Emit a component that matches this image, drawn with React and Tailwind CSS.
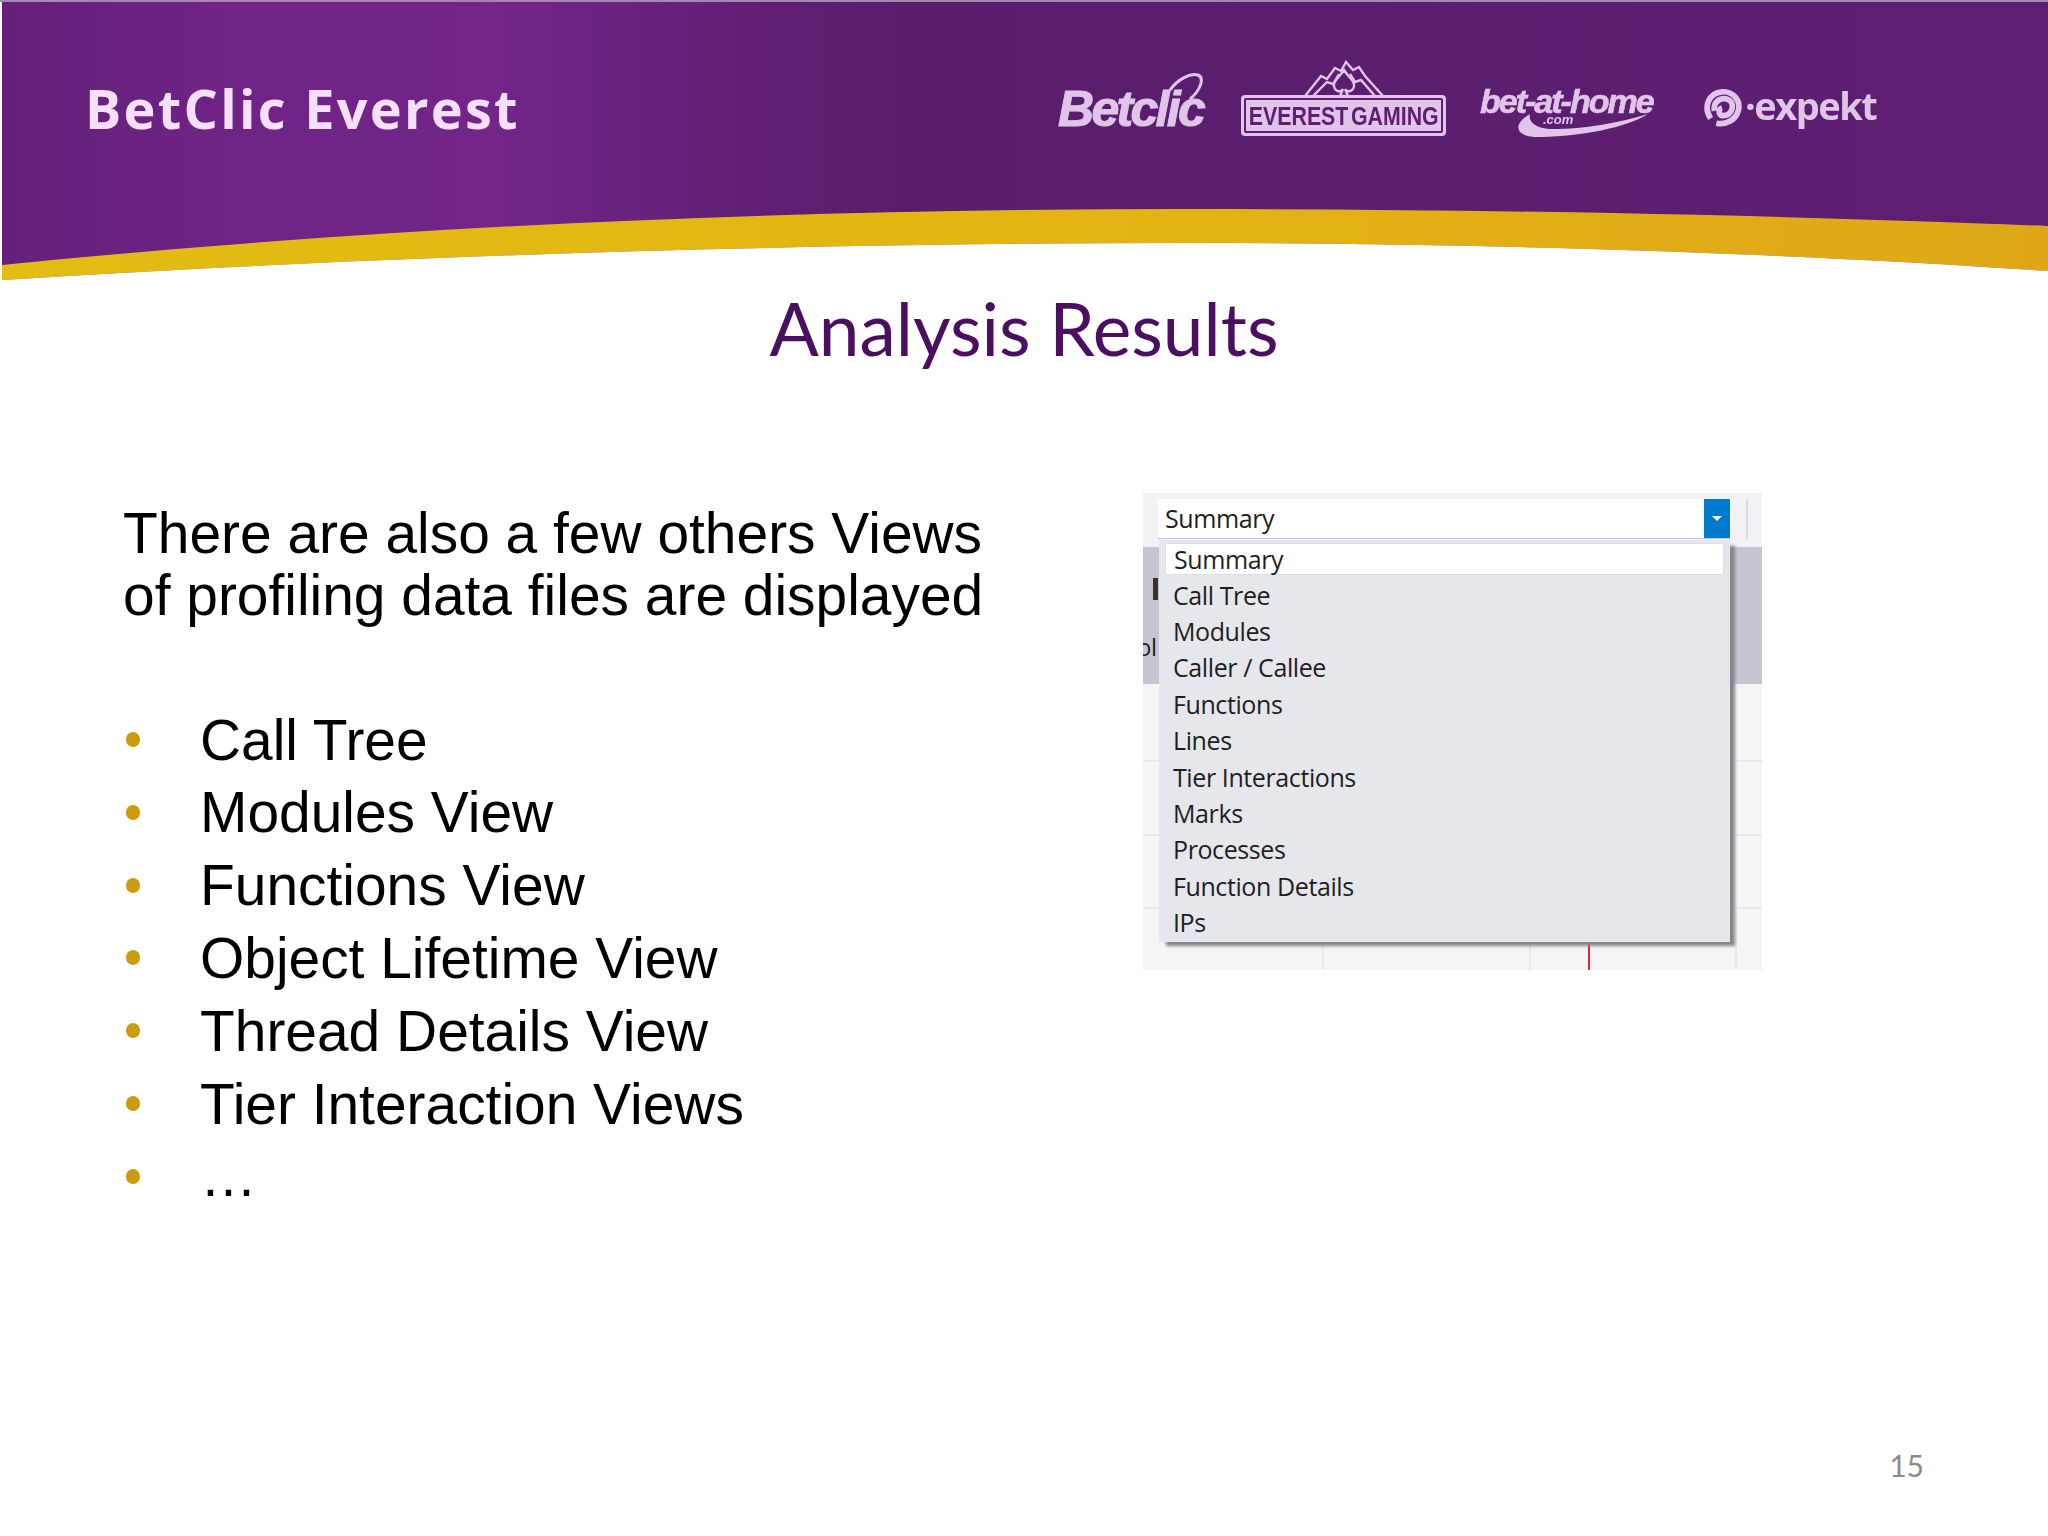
import React from 'react'

const bullets = [
  "Call Tree",
  "Modules View",
  "Functions View",
  "Object Lifetime View",
  "Thread Details View",
  "Tier Interaction Views",
  "…",
];

const menuItems = [
  "Call Tree",
  "Modules",
  "Caller / Callee",
  "Functions",
  "Lines",
  "Tier Interactions",
  "Marks",
  "Processes",
  "Function Details",
  "IPs",
];

const BannerArt = () => (
  <svg className="absolute inset-0" width="2048" height="290" viewBox="0 0 2048 290">
    <defs>
      <linearGradient id="bannerFill" x1="0" y1="0" x2="1" y2="0">
        <stop offset="0" stopColor="#65207a" />
        <stop offset="0.1" stopColor="#6e2385" />
        <stop offset="0.24" stopColor="#73258a" />
        <stop offset="0.34" stopColor="#642178" />
        <stop offset="0.44" stopColor="#5a1d6c" />
        <stop offset="1" stopColor="#5e1f72" />
      </linearGradient>
      <linearGradient id="goldFill" x1="0" y1="0" x2="1" y2="0">
        <stop offset="0" stopColor="#e2bd12" />
        <stop offset="0.5" stopColor="#e3b512" />
        <stop offset="1" stopColor="#dfa718" />
      </linearGradient>
    </defs>
    <rect x="2" y="2" width="2046" height="280" fill="url(#bannerFill)" />
    <rect x="0" y="0" width="2048" height="2" fill="#a884b6" />
    <path d="M2 280 V265 C 400 225 800 209 1190 209 C 1500 209 1800 216 2048 226 V271 C 1800 254 1500 243 1190 243 C 780 243 350 258 2 280 Z" fill="url(#goldFill)" />
    <path d="M2 280 C 350 258 780 243 1190 243 C 1500 243 1800 254 2048 271 V290 H0 V280 Z" fill="#ffffff" />
  </svg>
)

const BetclicLogo = () => (
  <div className="relative w-[147px] h-[64px] mt-[13px]">
    <svg className="absolute left-[108px] top-0" width="40" height="30" viewBox="0 0 40 30" fill="none">
      <path d="M4 17 C 12 6 24 0 32 2 C 39 5 34 18 24 26" stroke="#e0c4ea" strokeWidth="3" />
    </svg>
    <span className="absolute left-0 bottom-0 whitespace-nowrap font-['Liberation_Sans'] italic font-bold text-[50px] leading-[56px] tracking-[-2.7px] text-[#e0c4ea] [-webkit-text-stroke:1px_#e0c4ea]">Betclic</span>
  </div>
)

const EverestLogo = () => (
  <div className="flex flex-col items-center w-[205px] ml-[36px]">
    <svg className="-mb-[1px]" width="86" height="36" viewBox="0 0 82 36" fill="none" stroke="#e0c4ea" strokeWidth="2.4">
      <path d="M2 36 L18 16 L24 19 L32 8 L38 11 L43 2 L50 10 L56 7 L62 16 L80 36" />
      <path d="M10 36 L24 22 L30 24 L36 14 M72 36 L58 20 L52 22 L47 14" />
      <path d="M41 10 C 36 18 28 22 32 29 C 35 33 39 31 40 29 L37 36 H45 L42 29 C 43 31 47 33 50 29 C 54 22 46 18 41 10 Z" />
    </svg>
    <div className="w-full h-[41px] rounded-[4px] bg-[#e0c4ea] p-[3px]">
      <div className="h-full flex items-center justify-center rounded-[2px] border-2 border-[#5e1f72] overflow-hidden">
        <span className="shrink-0 scale-x-[0.82] whitespace-nowrap font-['Liberation_Sans',sans-serif] font-bold text-[26px] leading-none [word-spacing:-4px] text-[#5e1f72]">
          EVEREST GAMING
        </span>
      </div>
    </div>
  </div>
)

const BetAtHomeLogo = () => (
  <div className="relative w-[173px] h-[52px] mt-[26px] ml-[34px]">
    <span className="absolute left-0 top-0 whitespace-nowrap font-['Liberation_Sans'] italic font-bold text-[34px] leading-[30px] tracking-[-2px] text-[#e0c4ea] [-webkit-text-stroke:0.6px_#e0c4ea]">bet-at-home</span>
    <span className="absolute left-[63px] top-[28px] whitespace-nowrap font-['Liberation_Sans'] italic font-bold text-[13px] leading-[12px] text-[#e0c4ea]">.com</span>
    <svg className="absolute left-[36px] top-[26px]" width="134" height="27" viewBox="0 0 134 27">
      <path d="M14 2 C -4 12 -2 26 26 25 C 65 24 110 16 132 2 C 100 12 60 18 34 17 C 20 16 12 10 14 2 Z" fill="#e0c4ea" />
    </svg>
  </div>
)

const ExpektLogo = () => (
  <div className="flex items-center w-[175px] mt-[28px] ml-[50px]">
    <svg className="shrink-0" width="40" height="40" viewBox="0 0 42 42" fill="none" stroke="#e0c4ea" strokeWidth="6">
      <path d="M8 32 C 0 20 6 5 20 4 C 32 3 40 14 37 24 C 34 34 24 39 14 37" />
      <path d="M12 24 C 10 14 20 8 28 13 C 34 18 30 30 20 29 C 16 28 16 22 20 21" />
    </svg>
    <span className="ml-[2px] -mt-[6px] whitespace-nowrap font-['Open_Sans'] font-bold text-[38px] leading-[40px] tracking-[-1.5px] text-[#e0c4ea]">·expekt</span>
  </div>
)

const ProfilerPanel = () => (
  <div className="relative w-[619px] h-[477px] overflow-hidden flex flex-col bg-[#f5f5f6] font-['Open_Sans',sans-serif] text-[#1e1e1e]">
    {/* toolbar with the view combo */}
    <div className="h-[54px] shrink-0 flex items-start pt-[6px] pl-[15px] bg-[#f2f2f5]">
      <div className="w-[572px] h-[40px] flex items-center justify-between pl-[7px] bg-white border-b border-[#c0c6de]">
        <span className="text-[25px] leading-none tracking-[-0.4px]">Summary</span>
        <div className="w-[26px] h-full flex items-center justify-center bg-[#007acc]">
          <div className="w-0 h-0 border-x-[5px] border-x-transparent border-t-[5px] border-t-white"></div>
        </div>
      </div>
      <div className="ml-[16px] w-[2px] h-[40px] bg-[#d8d8e0]"></div>
    </div>

    {/* header band behind the menu */}
    <div className="h-[137px] shrink-0 bg-[#c6c6d2] flex flex-col items-start">
      <div className="ml-[10px] mt-[31px] w-[5px] h-[22px] bg-[#3d2f2a]"></div>
      <span className="-ml-[6px] mt-[35px] text-[24px] leading-[24px] tracking-[-0.4px]">ol</span>
    </div>

    {/* chart grid */}
    <div className="h-[78px] shrink-0 border-b-2 border-[#e8e8ea]"></div>
    <div className="h-[74px] shrink-0 border-b-2 border-[#e8e8ea]"></div>
    <div className="h-[73px] shrink-0 border-b-2 border-[#e8e8ea]"></div>
    <div className="flex-1 flex pl-[179px]">
      <div className="w-[207px] border-l-2 border-[#e8e8ea]"></div>
      <div className="w-[206px] border-l-2 border-[#e8e8ea] pl-[57px]">
        <div className="w-[2px] h-full bg-[#e5262c]"></div>
      </div>
      <div className="border-l-2 border-[#e8e8ea]"></div>
    </div>

    {/* open dropdown */}
    <div className="absolute left-[16px] top-[47px] w-[571px] h-[402px] bg-[#e6e7ed] pt-[3px] shadow-[6px_5px_3px_-1px_#85858a]">
      <div className="ml-[6px] w-[559px] h-[32px] flex items-center pl-[8px] bg-white border border-[#dcdde6] text-[25px] leading-none tracking-[-0.4px]">
        Summary
      </div>
      <div className="mt-[2px] flex flex-col">
        {menuItems.map((item) => (
          <div key={item} className="h-[36.4px] flex items-center pl-[14px] text-[25px] leading-none tracking-[-0.4px]">
            {item}
          </div>
        ))}
      </div>
    </div>
  </div>
)

const App = () => {
  return (
    <div className="w-[2048px] h-[1536px] overflow-hidden flex flex-col bg-white">
      {/* banner */}
      <div className="relative h-[280px] shrink-0">
        <BannerArt />
        <div className="relative flex items-start pl-[85px] pt-[60px]">
          <div className="mt-[16px] whitespace-nowrap font-['Open_Sans',sans-serif] font-bold text-[54px] leading-[64px] tracking-[2.3px] text-[#f6dffa] blur-[0.5px]">
            BetClic Everest
          </div>
          <div className="ml-auto mr-[170px] flex items-start blur-[0.5px]">
            <BetclicLogo />
            <EverestLogo />
            <BetAtHomeLogo />
            <ExpektLogo />
          </div>
        </div>
      </div>

      {/* title */}
      <h1 className="mt-[6px] text-center font-['Lato',sans-serif] text-[73px] leading-[84px] text-[#4b0f5f]">
        Analysis Results
      </h1>

      {/* content */}
      <div className="mt-[123px] flex items-start pl-[123px]">
        <div className="w-[1020px] pt-[10px] font-['Liberation_Sans',sans-serif] text-[56.9px] text-black">
          <p className="leading-[61.6px]">
            There are also a few others Views
            <br />
            of profiling data files are displayed
          </p>
          <ul className="mt-[77px] flex flex-col">
            {bullets.map((item) => (
              <li key={item} className="h-[72.8px] flex items-center">
                <span className="ml-[3px] w-[14px] h-[15px] rounded-full bg-[#cc9c0f]"></span>
                <span className="ml-[60px] leading-[72px]">{item}</span>
              </li>
            ))}
          </ul>
        </div>
        <ProfilerPanel />
      </div>

      {/* page number */}
      <div className="mt-auto mb-[53px] pr-[124px] text-right font-['Lato',sans-serif] text-[30px] leading-[36px] text-[#8b8b8b]">
        15
      </div>
    </div>
  )
}

export default App
